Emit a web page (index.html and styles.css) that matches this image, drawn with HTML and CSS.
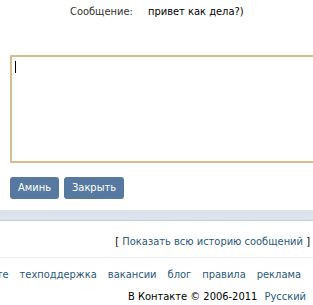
FILE: index.html
```html
<!DOCTYPE html>
<html lang="ru">
<head>
<meta charset="utf-8">
<link rel="stylesheet" href="styles.css">
</head>
<body>
<div class="page">
  <div class="msg-row">
    <span class="label">Сообщение:</span>
    <span class="value">привет как дела?)</span>
  </div>
  <div class="reply">
    <div class="field"><span class="caret"></span></div>
    <div class="buttons">
      <button class="btn">Аминь</button>
      <button class="btn">Закрыть</button>
    </div>
  </div>
  <div class="divider"></div>
  <div class="history"><span class="br">[</span> <a href="#">Показать всю историю сообщений</a> <span class="br">]</span></div>
  <div class="footer">
    <nav class="links">
      <a href="#">о сайте</a>
      <a href="#">техподдержка</a>
      <a href="#">вакансии</a>
      <a href="#">блог</a>
      <a href="#">правила</a>
      <a href="#">реклама</a>
    </nav>
    <div class="copy">В Контакте © 2006-2011 <a href="#">Русский</a></div>
  </div>
</div>
</body>
</html>
```
FILE: styles.css
```css
html, body {
  margin: 0;
  padding: 0;
  overflow: hidden;
  background: #fff;
}
body {
  font-family: "DejaVu Sans Condensed", "DejaVu Sans", sans-serif;
  font-size: 11px;
  color: #000;
  width: 313px;
}
a { color: #2b587a; text-decoration: none; }
.page { width: 313px; }
.msg-row {
  display: flex;
  padding-top: 5px;
  height: 20px;
  line-height: 13px;
}
.label { width: 78px; padding-left: 70px; color: #333; }
.value { color: #000; }
.reply { padding: 30px 0 0 10px; }
.field {
  width: 330px;
  height: 104px;
  border: 2px solid #d8bd8e;
  background: #fff;
  position: relative;
}
.caret {
  position: absolute;
  left: 3px;
  top: 4px;
  width: 1px;
  height: 12px;
  background: #000;
}
.buttons { display: flex; gap: 5px; margin-top: 14px; }
.btn {
  font: inherit;
  color: #fff;
  background: #57799f;
  border: 0;
  border-radius: 3px;
  height: 22px;
  padding: 0 8px;
  line-height: 22px;
}
.divider {
  margin-top: 11px;
  height: 10px;
  background: #dde3ea;
  border-bottom: 1px solid #c5ccd4;
}
.history {
  text-align: right;
  padding: 14px 3px 0 0;
  line-height: 13px;
  height: 22px;
  border-bottom: 1px solid #eceff2;
}
.br { color: #000; }
.footer { padding-top: 10px; }
.links {
  display: flex;
  justify-content: flex-end;
  gap: 11px;
  white-space: nowrap;
  padding-right: 12px;
  line-height: 13px;
}
.copy {
  text-align: right;
  padding: 9px 7px 0 0;
  line-height: 13px;
}
.copy a { margin-left: 4px; }
```
